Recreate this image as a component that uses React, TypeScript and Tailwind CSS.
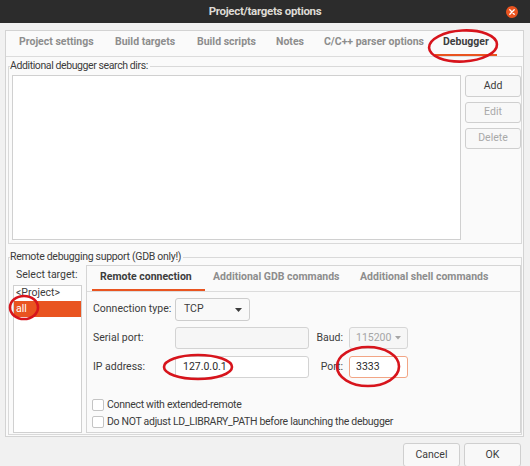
import React from "react";

function Tab({ label, active, w }: { label: string; active?: boolean; w: string }) {
  return (
    <div
      className={
        "flex items-center pl-[8px] font-bold text-[10.5px] whitespace-nowrap shrink-0 " +
        w +
        (active ? " text-[#3d3d3d] border-b-2 border-[#e95420]" : " text-[#8d8d8d] border-b-2 border-transparent")
      }
    >
      {label}
    </div>
  );
}

function Btn({ label, disabled, className }: { label: string; disabled?: boolean; className?: string }) {
  return (
    <div
      className={
        "flex items-center justify-center rounded-[3px] border border-[#cfcfcf] bg-[#f8f8f8] text-[10.5px] whitespace-nowrap " +
        (disabled ? "text-[#a9a9a9] " : "text-[#3c3c3c] ") +
        (className || "")
      }
    >
      {label}
    </div>
  );
}

function Check({ label }: { label: string }) {
  return (
    <div className="flex items-center gap-[3px] h-[12px] text-[10.5px] text-[#3c3c3c] whitespace-nowrap">
      <div className="w-[12px] h-[12px] rounded-[2px] border border-[#c4c4c4] bg-white shrink-0" />
      <span className="tracking-[-0.3px]">{label}</span>
    </div>
  );
}

export default function App() {
  return (
    <div className="relative w-[530px] h-[466px] overflow-hidden bg-[#f1f1f1] font-['Roboto','Noto_Sans',sans-serif] leading-none">
      {/* Title bar */}
      <div className="relative h-[23px] bg-[#2c2c2c] flex items-center justify-center">
        <span className="text-[11.5px] font-bold text-[#dedbd5] tracking-[-0.3px]">Project/targets options</span>
        <div className="absolute right-[12px] top-[6px] w-[12px] h-[12px] rounded-full bg-[#e95420] flex items-center justify-center">
          <svg width="6" height="6" viewBox="0 0 6 6">
            <path d="M0.8 0.8 L5.2 5.2 M5.2 0.8 L0.8 5.2" stroke="#fff" strokeWidth="1.3" strokeLinecap="round" />
          </svg>
        </div>
      </div>

      {/* Notebook */}
      <div className="mt-[7px] ml-[5px] w-[519px] h-[407px] border border-[#d3d3d3] bg-[#fafafa] flex flex-col">
        <div className="h-[26px] flex pl-[5px] border-b border-[#dcdcdc]">
          <Tab label="Project settings" w="w-[96px]" />
          <Tab label="Build targets" w="w-[82px]" />
          <Tab label="Build scripts" w="w-[79px]" />
          <Tab label="Notes" w="w-[48px]" />
          <Tab label="C/C++ parser options" w="w-[119px]" />
          <Tab label="Debugger" active w="w-[62px]" />
        </div>

        <div className="flex flex-col pl-[2px] pr-[1px] pt-[2px]">
          {/* Group 1 */}
          <fieldset className="border border-[#d9d9d9] pl-[3px] pb-[3px]">
            <legend className="-ml-[2px] text-[10.5px] leading-[14px] text-[#3c3c3c] pr-[2px] whitespace-nowrap tracking-[-0.4px]">
              Additional debugger search dirs:
            </legend>
            <div className="flex gap-[4px] h-[165px] mt-[2px]">
              <div className="flex-1 border border-[#d0d0d0] bg-white" />
              <div className="w-[56px] flex flex-col gap-[5px]">
                <Btn label="Add" className="h-[22px]" />
                <Btn label="Edit" disabled className="h-[21px]" />
                <Btn label="Delete" disabled className="h-[21px]" />
              </div>
            </div>
          </fieldset>

          {/* Group 2 */}
          <fieldset className="mt-[6px] border border-[#d9d9d9] pl-[4px] pb-[1px]">
            <legend className="-ml-[3px] text-[10.5px] leading-[14px] text-[#3c3c3c] pr-[2px] whitespace-nowrap tracking-[-0.3px]">
              Remote debugging support (GDB only!)
            </legend>
            <div className="flex gap-[4px] h-[168px] mt-[1px]">
              <div className="w-[69px] flex flex-col shrink-0">
                <div className="h-[20px] pl-[3px] pt-[5px] text-[10.5px] text-[#3c3c3c] whitespace-nowrap">Select target:</div>
                <div className="flex-1 border border-[#d0d0d0] bg-white text-[10.5px]">
                  <div className="h-[15px] flex items-center pl-[2px] text-[#3c3c3c]">&lt;Project&gt;</div>
                  <div className="h-[16px] flex items-center pl-[2px] bg-[#e95420] text-white">all</div>
                </div>
              </div>

              <div className="flex-1 border border-[#d5d5d5] bg-[#fafafa] flex flex-col">
                <div className="h-[26px] flex pl-[5px] border-b border-[#dcdcdc]">
                  <Tab label="Remote connection" active w="w-[113px]" />
                  <Tab label="Additional GDB commands" w="w-[147px]" />
                  <Tab label="Additional shell commands" w="w-[144px]" />
                </div>
                <div className="flex flex-col px-[6px] pt-[6px] text-[10.5px] text-[#3c3c3c] whitespace-nowrap">
                  <div className="flex items-center h-[23px]">
                    <div className="w-[82px]">Connection type:</div>
                    <div className="w-[75px] h-[23px] rounded-[3px] border border-[#cdcdcd] bg-[#f9f9f9] flex items-center justify-between pl-[8px] pr-[7px]">
                      <span>TCP</span>
                      <svg width="7" height="4" viewBox="0 0 7 4">
                        <path d="M0 0 L7 0 L3.5 4 Z" fill="#3c3c3c" />
                      </svg>
                    </div>
                  </div>
                  <div className="flex items-center h-[22px] mt-[6px]">
                    <div className="w-[82px]">Serial port:</div>
                    <div className="w-[134px] h-[22px] rounded-[3px] border border-[#d3d3d3] bg-[#f6f6f6]" />
                    <div className="w-[34px] text-right">Baud:</div>
                    <div className="ml-[6px] w-[59px] h-[22px] rounded-[3px] border border-[#d6d6d6] bg-[#f6f6f6] flex items-center gap-[4px] pl-[6px] text-[#a5a5a5]">
                      <span>115200</span>
                      <svg width="6" height="4" viewBox="0 0 6 4">
                        <path d="M0 0 L6 0 L3 3.5 Z" fill="#a5a5a5" />
                      </svg>
                    </div>
                  </div>
                  <div className="flex items-center h-[22px] mt-[7px]">
                    <div className="w-[82px]">IP address:</div>
                    <div className="w-[134px] h-[22px] rounded-[3px] border border-[#d3d3d3] bg-white flex items-center pl-[7px] text-[#2a2a2a]">
                      127.0.0.1
                    </div>
                    <div className="w-[34px] text-right">Port:</div>
                    <div className="ml-[6px] w-[59px] h-[22px] rounded-[3px] border border-[#f2a585] bg-white flex items-center pl-[6px] text-[#2a2a2a]">
                      3333
                    </div>
                  </div>
                  <div className="mt-[21px] flex flex-col gap-[5px] -ml-[1px]">
                    <Check label="Connect with extended-remote" />
                    <Check label="Do NOT adjust LD_LIBRARY_PATH before launching the debugger" />
                  </div>
                </div>
              </div>
            </div>
          </fieldset>
        </div>
      </div>

      {/* Dialog buttons */}
      <div className="flex justify-end gap-[4px] pr-[9px] mt-[6px]">
        <Btn label="Cancel" className="w-[57px] h-[24px]" />
        <Btn label="OK" className="w-[57px] h-[24px]" />
      </div>

      {/* Red annotation ellipses */}
      <svg className="absolute inset-0 pointer-events-none" width="530" height="466" viewBox="0 0 530 466">
        <g fill="none" stroke="#d7141c" strokeWidth="2.6">
          <ellipse cx="463" cy="46" rx="34" ry="15.5" transform="rotate(-3 463 46)" />
          <ellipse cx="24" cy="307.5" rx="14" ry="11.5" />
          <ellipse cx="198" cy="367" rx="34" ry="12" />
          <ellipse cx="368" cy="366.5" rx="31" ry="19.5" />
        </g>
      </svg>
    </div>
  );
}
